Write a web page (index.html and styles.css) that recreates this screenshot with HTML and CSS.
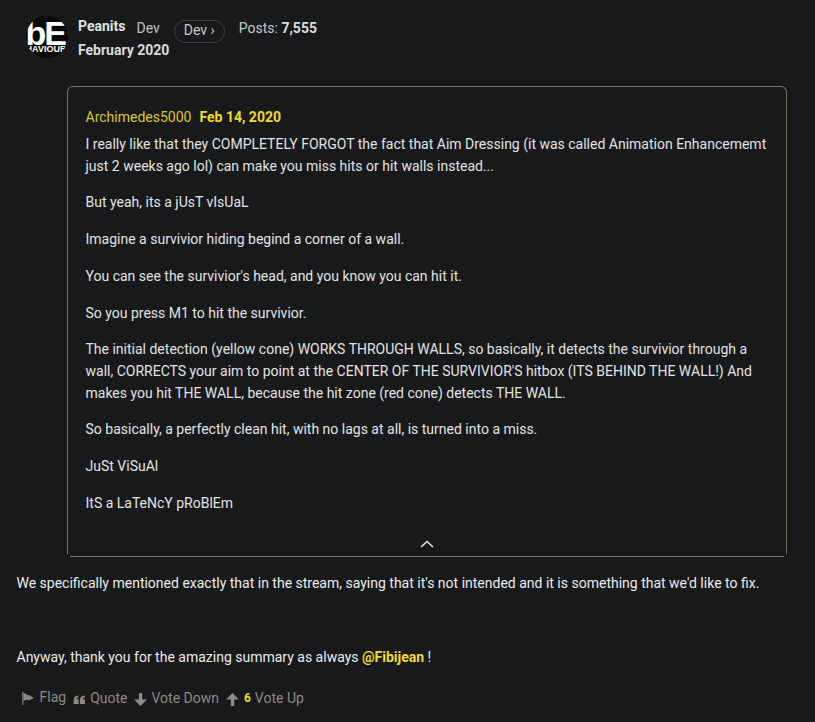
FILE: index.html
```html
<!DOCTYPE html>
<html lang="en">
<head>
<meta charset="utf-8">
<title>Peanits</title>
<link rel="stylesheet" href="styles.css">
</head>
<body>
<main class="post">
  <header class="author">
    <svg class="avatar" width="42" height="42" viewBox="0 0 42 42" role="img" aria-label="Behaviour logo">
      <defs><clipPath id="avatar-clip"><circle cx="21" cy="21" r="21"/></clipPath></defs>
      <g clip-path="url(#avatar-clip)">
        <rect width="42" height="42" fill="#0a0a0a"/>
        <text class="logo-be" x="-0.500" y="29">bE</text>
        <text class="logo-sub" x="20" y="36">HAVIOUR</text>
      </g>
    </svg>
    <div class="meta">
      <div class="meta-row">
        <strong class="name">Peanits</strong>
        <span class="title">Dev</span>
        <span class="badge">Dev ›</span>
        <span class="posts">Posts: <b>7,555</b></span>
      </div>
      <div class="date">February 2020</div>
    </div>
  </header>

  <div class="quote-wrap">
    <blockquote class="quote">
      <div class="quote-head"><span class="quote-user">Archimedes5000</span><b class="quote-date">Feb 14, 2020</b></div>
      <p>I really like that they COMPLETELY FORGOT the fact that Aim Dressing (it was called Animation Enhancememt just 2 weeks ago lol) can make you miss hits or hit walls instead...</p>
      <p>But yeah, its a jUsT vIsUaL</p>
      <p>Imagine a survivior hiding begind a corner of a wall.</p>
      <p>You can see the survivior's head, and you know you can hit it.</p>
      <p>So you press M1 to hit the survivior.</p>
      <p>The initial detection (yellow cone) WORKS THROUGH WALLS, so basically, it detects the survivior through a wall, CORRECTS your aim to point at the CENTER OF THE SURVIVIOR'S hitbox (ITS BEHIND THE WALL!) And makes you hit THE WALL, because the hit zone (red cone) detects THE WALL.</p>
      <p>So basically, a perfectly clean hit, with no lags at all, is turned into a miss.</p>
      <p>JuSt ViSuAl</p>
      <p>ItS a LaTeNcY pRoBlEm</p>
      <svg class="chevron" width="14" height="8" viewBox="0 0 14 8" aria-hidden="true"><path d="M1 7 L7 1.500 L13 7" fill="none" stroke="#e6e6e6" stroke-width="1.600"/></svg>
    </blockquote>
    <div class="quote-rule"></div>
  </div>

  <p class="body-text first">We specifically mentioned exactly that in the stream, saying that it's not intended and it is something that we'd like to fix.</p>
  <p class="body-text second">Anyway, thank you for the amazing summary as always <a class="mention">@Fibijean</a> !</p>

  <footer class="actions">
    <span class="action flag">
      <svg width="14" height="14" viewBox="0 0 14 14" aria-hidden="true"><path d="M1 1h1.400v13H1z" fill="#6f6a64"/><path d="M2.400 1.500 L7 4.500 L8 4 L13 7 L7.500 9.500 L6 8.500 L2.400 10z" fill="#8f8a84"/></svg>
      <span>Flag</span></span>
    <span class="action tight">
      <svg width="13" height="9" viewBox="0 0 13 10" aria-hidden="true"><path d="M0 10V5.500C0 2.500 1.800.8 5.300.5v2.200C3.900 3 3.200 3.600 3.100 4.800H5.600V10zM7 10V5.500C7 2.500 8.800.8 12.300.5v2.200C10.900 3 10.200 3.600 10.100 4.800H12.600V10z" fill="#8f8a84"/></svg>
      <span>Quote</span></span>
    <span class="action tight">
      <svg width="13" height="13" viewBox="0 0 13 13" aria-hidden="true"><path d="M4.800 0h3.400v6.500H13L6.500 13 0 6.500h4.800z" fill="#8f8a84"/></svg>
      <span>Vote Down</span></span>
    <span class="action">
      <svg width="13" height="13" viewBox="0 0 13 13" aria-hidden="true"><path d="M4.800 13h3.400V6.500H13L6.500 0 0 6.500h4.800z" fill="#8f8a84"/></svg>
      <b class="count">6</b><span class="up-label">Vote Up</span></span>
  </footer>
</main>
</body>
</html>
```
FILE: styles.css
```css
* { box-sizing: border-box; }
html, body { margin: 0; height: 100%; overflow: hidden; }
body {
  background: #17191b;
  color: #e3e3e3;
  font-family: Roboto, "Liberation Sans", sans-serif;
  font-size: 14px;
  line-height: 21.7px;
}
.post { padding: 16px 28px 0 16.500px; }
.author { display: flex; gap: 10px; padding-left: 9.500px; height: 70px; }
.avatar { display: block; flex: none; }
.logo-be { font: 700 34px "Liberation Sans", sans-serif; letter-spacing: -2px; fill: #fff; }
.logo-sub { font: 700 9px "Liberation Sans", sans-serif; fill: #fff; text-anchor: middle; }
.meta { padding-top: 1px; color: #dcdcdc; }
.meta-row { display: flex; align-items: center; height: 22px; }
.name { color: #e0e0e0; font-weight: 700; position: relative; top: -1px; }
.title { margin-left: 11px; margin-top: 1px; color: #c4c4c4; }
.badge {
  margin-left: 14px; height: 23px; padding: 0 9px; border: 1px solid #3f4042; border-radius: 12px;
  display: flex; align-items: center; color: #c8c8c8; position: relative; top: 3px;
}
.posts { margin-left: 14px; margin-top: 1px; color: #c8c8c8; }
.posts b { color: #dcdcdc; }
.date { font-weight: 700; color: #dcdcdc; margin-top: 1px; }
.quote-wrap { margin-left: 50.500px; }
.quote {
  position: relative; margin: 0; height: 468px; padding: 20px 18px 0 17.500px;
  border: 1px solid #7a7263; border-bottom: 0; border-radius: 6px 6px 0 0;
}
.quote-head { height: 27px; }
.quote-date { color: #f5d924; margin-left: 8px; }
.quote-user { color: #dcc81e; }
.quote p { margin: 0 0 15px; color: #e3e3e3; }
.chevron { position: absolute; left: 352px; bottom: 6px; }
.quote-rule { height: 1px; margin: 2px 3px 0; background: #7a7263; }
.body-text { margin: 0; color: #ececec; }
.first { margin-top: 16px; }
.second { margin-top: 52px; }
.mention { color: #f5d924; font-weight: 700; }
.actions { display: flex; gap: 7px; margin-top: 20px; padding-left: 4px; color: #8f8a84; }
.action { display: flex; align-items: center; gap: 5px; }
.action.tight { gap: 4px; }
.up-label { margin-left: -1px; }
.flag { position: relative; top: -1px; }
.count { color: #f5d924; font-size: 12px; }
```
